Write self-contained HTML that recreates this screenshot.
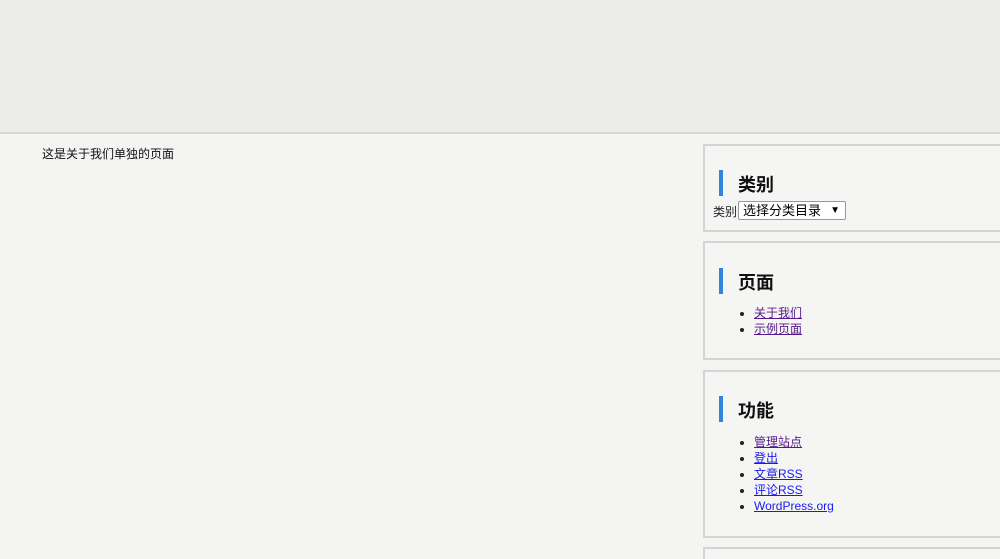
<!DOCTYPE html>
<html style="width:1000px;height:559px;overflow:hidden"><head><meta charset="utf-8"><style>
*{margin:0;padding:0;box-sizing:border-box}
body{width:1000px;height:559px;overflow:hidden;background:#f4f4f3;font-family:"Liberation Sans","Noto Sans CJK SC",sans-serif;font-size:12px;color:#222;position:relative}
.hdr{position:absolute;left:0;top:0;width:1000px;height:134px;background:#ececeb;border-bottom:2px solid #d6d6d6}
.txt{position:absolute;left:42px;top:145px;font-size:12px;color:#111}
.box{position:absolute;left:703px;width:310px;border:2px solid #d4d4d4;background:#f5f5f4}
.h{position:absolute;left:14px;height:26px;border-left:4px solid #2f86dc;padding-left:15px;font-size:18px;font-weight:bold;color:#111;line-height:26px}
.h span{position:relative;top:2px}
ul{position:absolute;left:49px;list-style:disc;font-size:12px;line-height:16px}
a{color:#1a1aee;text-decoration:underline}
a.v{color:#551a8b}
.lbl{position:absolute;left:8px;top:57px;font-size:12px}
.sel{position:absolute;left:33px;top:55px;width:108px;height:19px;border:1px solid #999;border-radius:2px;background:#fff;font-size:13px;line-height:17px;padding-left:4px;color:#000}
.sel span{position:absolute;right:5px;top:0;font-size:10px}
</style></head><body>
<div class="hdr"></div>
<div class="txt">这是关于我们单独的页面</div>
<div class="box" style="top:144px;height:88px">
<div class="h" style="top:24px"><span>类别</span></div>
<div class="lbl">类别</div>
<div class="sel">选择分类目录<span>▼</span></div>
</div>
<div class="box" style="top:241px;height:119px">
<div class="h" style="top:25px"><span>页面</span></div>
<ul style="top:62px"><li><a class="v">关于我们</a></li><li><a class="v">示例页面</a></li></ul>
</div>
<div class="box" style="top:370px;height:168px">
<div class="h" style="top:24px"><span>功能</span></div>
<ul style="top:62px"><li><a class="v">管理站点</a></li><li><a>登出</a></li><li><a>文章RSS</a></li><li><a>评论RSS</a></li><li><a>WordPress.org</a></li></ul>
</div>
<div class="box" style="top:547px;height:12px;border-bottom:none"></div>
</body></html>
